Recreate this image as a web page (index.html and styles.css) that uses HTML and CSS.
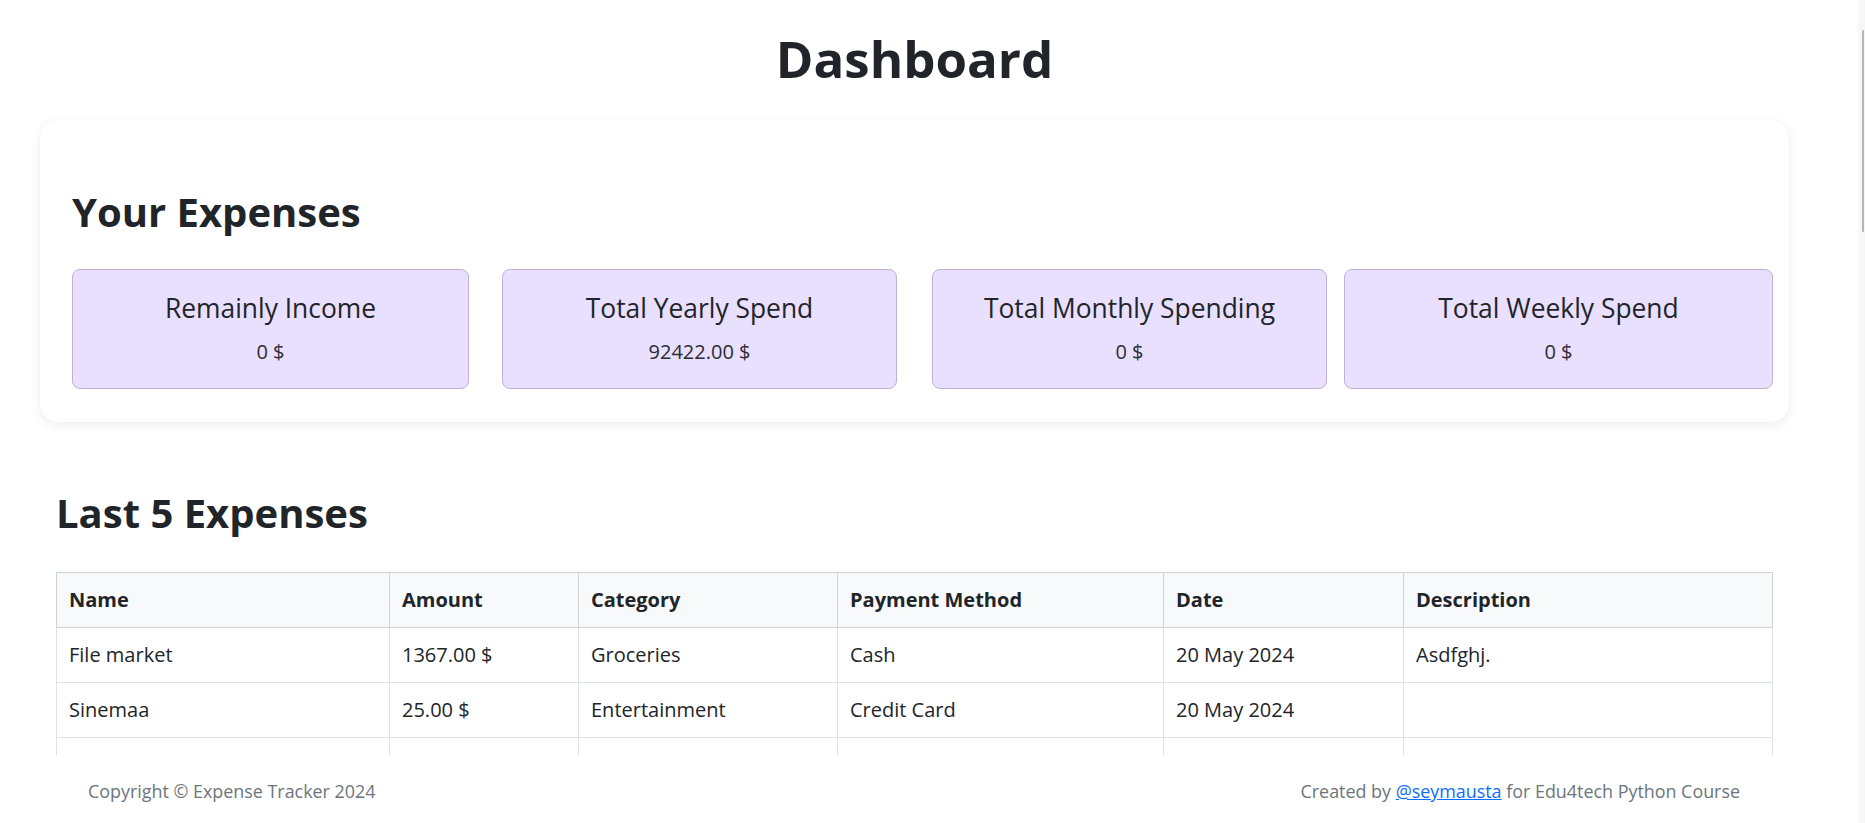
FILE: index.html
```html
<!DOCTYPE html>
<html lang="en">
<head>
<meta charset="utf-8">
<title>Dashboard - Expense Tracker</title>
<link rel="stylesheet" href="styles.css">
</head>
<body>
<main class="container">
  <h1 class="page-title">Dashboard</h1>

  <section class="summary">
    <h2 class="section-title">Your Expenses</h2>
    <div class="stats">
      <div class="stat">
        <h4 class="stat-title">Remainly Income</h4>
        <p class="stat-value">0 $</p>
      </div>
      <div class="stat">
        <h4 class="stat-title">Total Yearly Spend</h4>
        <p class="stat-value">92422.00 $</p>
      </div>
      <div class="stat">
        <h4 class="stat-title">Total Monthly Spending</h4>
        <p class="stat-value">0 $</p>
      </div>
      <div class="stat">
        <h4 class="stat-title">Total Weekly Spend</h4>
        <p class="stat-value">0 $</p>
      </div>
    </div>
  </section>

  <section class="recent">
    <h2 class="section-title">Last 5 Expenses</h2>
    <table class="expenses">
      <colgroup>
        <col class="col-name">
        <col class="col-amount">
        <col class="col-category">
        <col class="col-method">
        <col class="col-date">
        <col class="col-desc">
      </colgroup>
      <thead>
        <tr>
          <th>Name</th>
          <th>Amount</th>
          <th>Category</th>
          <th>Payment Method</th>
          <th>Date</th>
          <th>Description</th>
        </tr>
      </thead>
      <tbody>
        <tr>
          <td>File market</td>
          <td>1367.00 $</td>
          <td>Groceries</td>
          <td>Cash</td>
          <td>20 May 2024</td>
          <td>Asdfghj.</td>
        </tr>
        <tr>
          <td>Sinemaa</td>
          <td>25.00 $</td>
          <td>Entertainment</td>
          <td>Credit Card</td>
          <td>20 May 2024</td>
          <td></td>
        </tr>
        <tr class="empty-row">
          <td></td><td></td><td></td><td></td><td></td><td></td>
        </tr>
      </tbody>
    </table>
  </section>
</main>

<footer class="footer">
  <span class="copyright">Copyright © Expense Tracker 2024</span>
  <span class="credit">Created by <a href="#" class="credit-link">@seymausta</a> for Edu4tech Python Course</span>
</footer>

<div class="scrollbar"><div class="scrollbar-thumb"></div></div>
</body>
</html>
```

FILE: styles.css
```css
html, body {
  margin: 0;
  padding: 0;
  overflow: hidden;
  background: #ffffff;
}

body {
  font-family: "Open Sans", "Noto Sans", "Liberation Sans", sans-serif;
  color: #212529;
  font-size: 17.6px;
}

.container {
  width: 1749px;
  margin-left: 40px;
  padding-top: 24px;
}

.page-title {
  margin: 0 0 28px;
  text-align: center;
  font-size: 51px;
  line-height: 68px;
  font-weight: 700;
}

.summary {
  background: #ffffff;
  border-radius: 18px;
  box-shadow: 0 3px 12px rgba(0, 0, 0, 0.07), 0 0 2px rgba(0, 0, 0, 0.04);
  padding: 65px 16px 33px 32px;
}

.section-title {
  margin: 0 0 31px;
  font-size: 40px;
  line-height: 53px;
  font-weight: 700;
}

.stats {
  display: flex;
}

.stat {
  box-sizing: border-box;
  height: 120px;
  width: 397px;
  padding: 23px 8px;
  background: #e9dfff;
  border: 1px solid #bfb2d6;
  border-radius: 8px;
  text-align: center;
}

.stat:nth-child(2) {
  margin-left: 33px;
  width: 395px;
}

.stat:nth-child(3) {
  margin-left: 35px;
  width: 395px;
}

.stat:nth-child(4) {
  margin-left: 17px;
  width: 429px;
}

.stat-title {
  margin: 0;
  font-size: 26.4px;
  line-height: 31px;
  font-weight: 500;
  color: #212529;
}

.stat-value {
  margin: 14px 0 0;
  font-size: 20px;
  line-height: 27px;
  font-weight: 400;
  color: #2b2d33;
}

.recent {
  margin-top: 64px;
  margin-left: 16px;
}

.recent .section-title {
  margin-bottom: 33px;
}

.expenses {
  width: 1716px;
  border-collapse: collapse;
  table-layout: fixed;
  font-size: 20px;
  line-height: 28px;
}

.col-name { width: 333px; }
.col-amount { width: 189px; }
.col-category { width: 259px; }
.col-method { width: 326px; }
.col-date { width: 240px; }
.col-desc { width: 369px; }

.expenses th,
.expenses td {
  padding: 13px 12px;
  text-align: left;
  border: 1px solid #dee2e6;
  vertical-align: middle;
}

.expenses thead th {
  background: #f8f9fa;
  font-weight: 700;
  border-color: #cfd2d5;
}

.empty-row td {
  height: 28px;
}

.footer {
  position: fixed;
  left: 0;
  right: 0;
  bottom: 0;
  height: 68px;
  box-sizing: border-box;
  padding: 4px 125px 0 88px;
  background: #ffffff;
  display: flex;
  align-items: center;
  justify-content: space-between;
  font-size: 17.9px;
  color: #6c757d;
}

.credit-link {
  color: #0d6efd;
  text-decoration: underline;
}

.scrollbar {
  position: fixed;
  top: 0;
  right: 0;
  bottom: 0;
  width: 7px;
  background: #f7f7f7;
}

.scrollbar-thumb {
  margin-top: 30px;
  margin-left: 4px;
  width: 2px;
  height: 202px;
  background: #b5b5b5;
  border-radius: 1px;
}
```
